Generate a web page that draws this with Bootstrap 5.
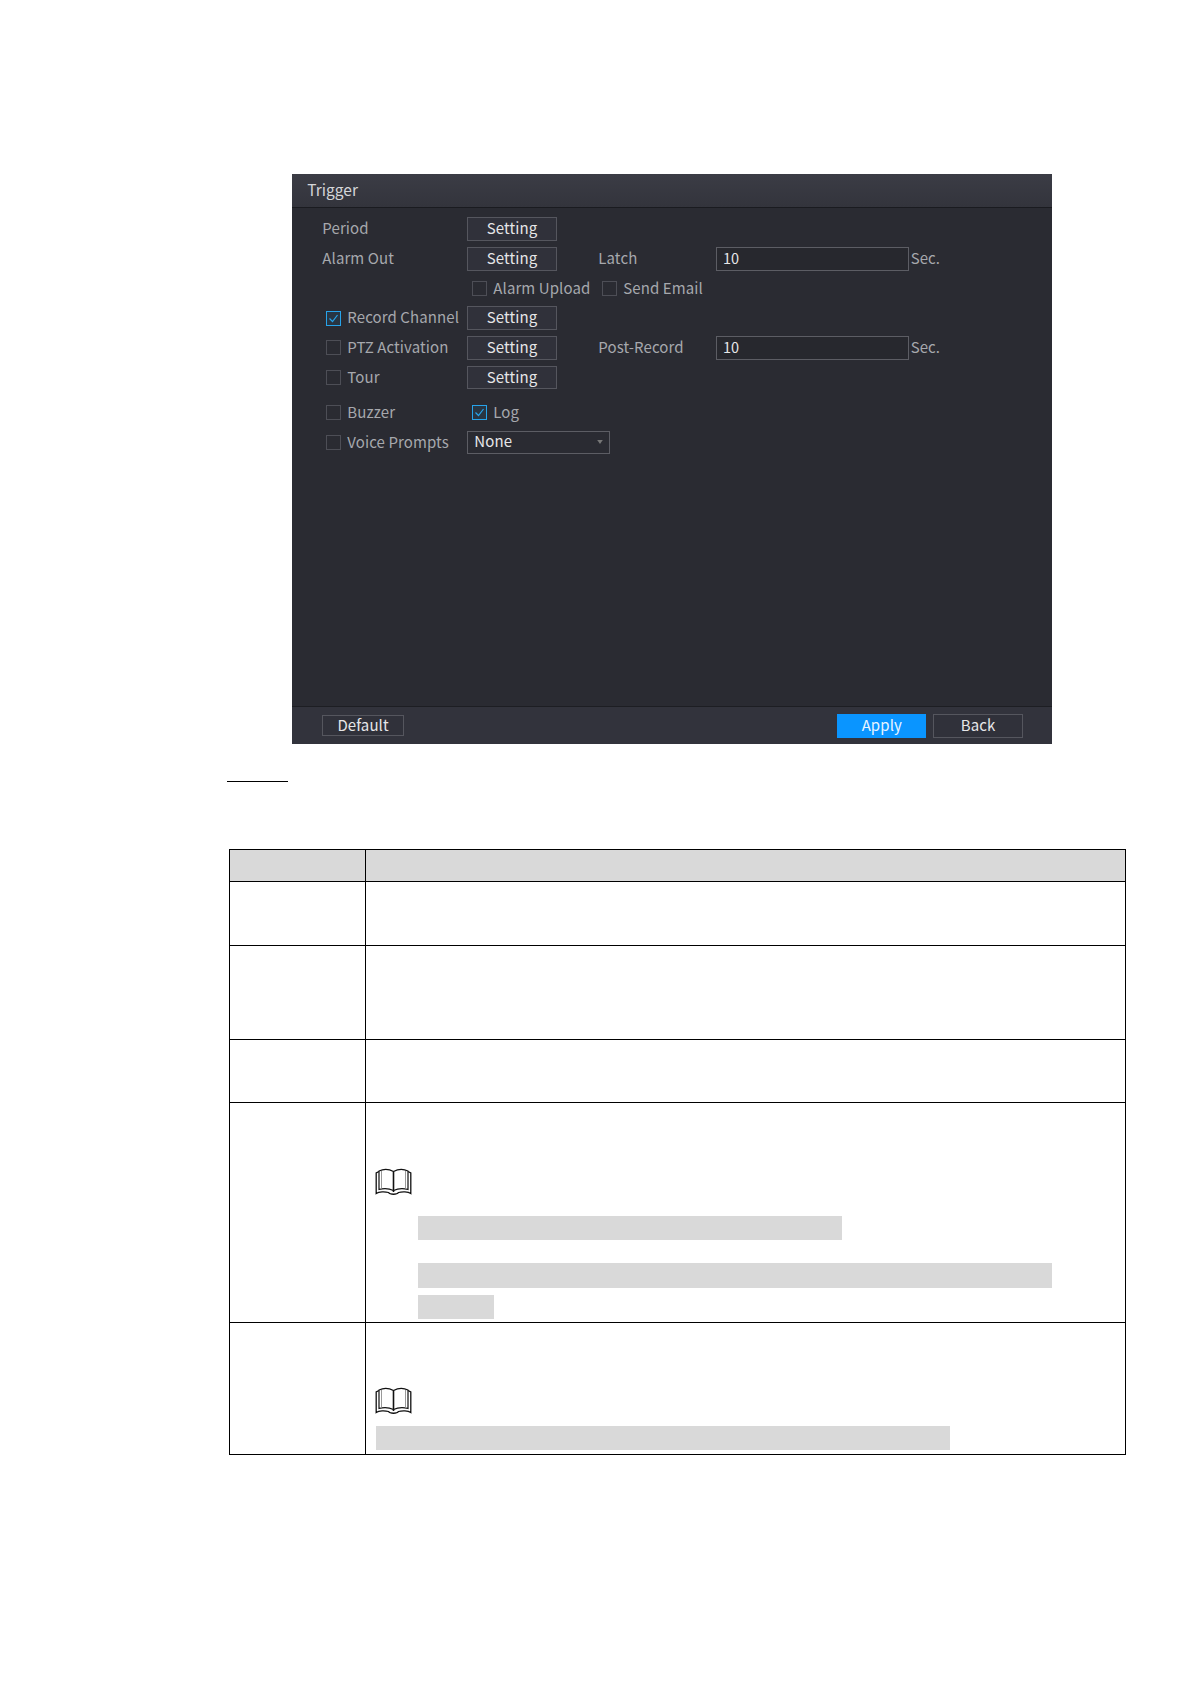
<!DOCTYPE html>
<html lang="en">
<head>
<meta charset="utf-8">
<title>Trigger</title>
<link href="https://cdn.jsdelivr.net/npm/bootstrap@5.3.0/dist/css/bootstrap.min.css" rel="stylesheet">
<style>
body{background:#fff;font-family:"Noto Sans CJK SC","Noto Sans",sans-serif;}
.sheet{width:1191px;height:1684px;padding-top:174.3px;}
.dvr{width:760px;height:570px;margin-left:292.3px;background:#2a2b32;color:#a6a8ad;font-size:15px;line-height:1;letter-spacing:.1px;}
.dvr-head{height:33.500px;background:linear-gradient(#3b3c45,#33343c);border-bottom:1px solid #1a1b20;padding:0 0 2px 15px;color:#d4d5d8;font-size:15.5px;letter-spacing:0;}
.dvr-body{padding:9.500px 0 0 30px;gap:6px;}
.dvr-foot{height:38.500px;background:#32333c;border-top:1px solid #1d1e23;padding:0 29.5px 0 30px;}
.frow{height:23.7px;}
.frow-gap{margin-top:5.5px;}
.frow>span,.frow>label{padding-bottom:2.500px;}
.frow>label>.chk{margin-top:2.500px;}
.lab{width:145px;}
.lab-in{width:145px;padding-left:4px;}
.lab-c{margin-left:5px;width:130px;}
.lab-w{width:117.7px;margin-left:41.6px;}
.sec{margin-left:2px;}
.dvr .chk{width:15px;height:15px;margin-right:6px;margin-bottom:0;margin-left:0;flex:none;background-color:transparent;border:1px solid #4d4e56;border-radius:0;}
.dvr .chk:checked{background-color:#283542;border-color:#27a3ea;background-size:11px;background-image:url("data:image/svg+xml,%3csvg xmlns='http://www.w3.org/2000/svg' viewBox='0 0 11 11'%3e%3cpath fill='none' stroke='%2327a3ea' stroke-width='1.2' d='M1.5 5.5l3 3 5-6.5'/%3e%3c/svg%3e");}
.dvr .btnx{width:89.4px;height:23.7px;padding:0 0 3px;background:#30313a;border:1px solid #55565e;border-radius:0;color:#e6e6e8;font-size:15px;line-height:1;letter-spacing:.1px;}
.dvr .fld{width:192.7px;height:23.7px;padding:0 0 2px 6px;background:#27282e;border:1px solid #5c5d64;border-radius:0;color:#e6e6e8;font-size:14.5px;line-height:1;}
.dvr .pick{width:142.4px;height:23.7px;padding:0 0 3px 6px;background-color:#2a2b32;background-size:6px 4px;background-position:right 6px center;background-image:url("data:image/svg+xml,%3csvg xmlns='http://www.w3.org/2000/svg' viewBox='0 0 7 5'%3e%3cpath fill='%23777' d='M0 0h7L3.500 5z'/%3e%3c/svg%3e");border:1px solid #5c5d64;border-radius:0;color:#e6e6e8;font-size:15px;line-height:1;letter-spacing:.1px;}
.dvr .btn-def{width:81.500px;height:21.500px;}
.dvr .btn-back{width:89.500px;height:24px;margin-left:7px;}
.dvr .btn-apply{width:89px;height:24px;padding:0 0 3px;background:#0a95ff;border:0;border-radius:0;color:#e8f4ff;font-size:15px;line-height:1;letter-spacing:.1px;}
.rule{width:61.300px;height:1.500px;background:#000;margin:36.300px 0 0 226.700px;}
.spec{--bs-table-border-color:#000;width:897px;margin:66.500px 0 0 229.300px;table-layout:fixed;}
.spec>*>tr>*{padding:0;border:1px solid #000;background:transparent;box-shadow:none;}
.spec>thead>tr>th{background:#d9d9d9;}
.col-a{width:136px;}
.h0{height:32px;}.h1{height:64px;}.h2{height:94px;}.h3{height:63px;}.h4{height:220px;}.h5{height:132px;}
.tip{display:block;width:37px;height:27px;margin-left:8.500px;}
.tip-a{margin-top:65px;}
.tip-b{margin-top:64px;}
.redact{background:#d9d9d9;height:24.500px;}
.r1{width:424px;margin:21px 0 0 52px;}
.r2{width:634px;margin:23px 0 0 52px;}
.r3{width:76px;margin:7px 0 0 52px;}
.r4{width:574px;margin:12px 0 0 10px;}
</style>
</head>
<body>
<div class="sheet">
  <div class="dvr d-flex flex-column">
    <div class="dvr-head d-flex align-items-center">Trigger</div>
    <div class="dvr-body d-flex flex-column flex-grow-1">
      <div class="frow d-flex align-items-center"><span class="lab">Period</span><button class="btn btnx" type="button">Setting</button></div>
      <div class="frow d-flex align-items-center"><span class="lab">Alarm Out</span><button class="btn btnx" type="button">Setting</button><span class="lab-w">Latch</span><input class="form-control fld" value="10"><span class="sec">Sec.</span></div>
      <div class="frow d-flex align-items-center"><span class="lab"></span><label class="lab-c d-flex align-items-center"><input class="form-check-input chk" type="checkbox">Alarm Upload</label><label class="d-flex align-items-center"><input class="form-check-input chk" type="checkbox">Send Email</label></div>
      <div class="frow d-flex align-items-center"><label class="lab-in d-flex align-items-center"><input class="form-check-input chk" type="checkbox" checked>Record Channel</label><button class="btn btnx" type="button">Setting</button></div>
      <div class="frow d-flex align-items-center"><label class="lab-in d-flex align-items-center"><input class="form-check-input chk" type="checkbox">PTZ Activation</label><button class="btn btnx" type="button">Setting</button><span class="lab-w">Post-Record</span><input class="form-control fld" value="10"><span class="sec">Sec.</span></div>
      <div class="frow d-flex align-items-center"><label class="lab-in d-flex align-items-center"><input class="form-check-input chk" type="checkbox">Tour</label><button class="btn btnx" type="button">Setting</button></div>
      <div class="frow frow-gap d-flex align-items-center"><label class="lab-in d-flex align-items-center"><input class="form-check-input chk" type="checkbox">Buzzer</label><label class="lab-c d-flex align-items-center"><input class="form-check-input chk" type="checkbox" checked>Log</label></div>
      <div class="frow d-flex align-items-center"><label class="lab-in d-flex align-items-center"><input class="form-check-input chk" type="checkbox">Voice Prompts</label><select class="form-select pick"><option>None</option></select></div>
    </div>
    <div class="dvr-foot d-flex align-items-center justify-content-between">
      <button class="btn btnx btn-def" type="button">Default</button>
      <div class="d-flex align-items-center">
        <button class="btn btn-apply" type="button">Apply</button>
        <button class="btn btnx btn-back" type="button">Back</button>
      </div>
    </div>
  </div>
  <div class="rule"></div>
  <table class="table table-bordered spec mb-0">
    <thead><tr class="h0"><th class="col-a"></th><th></th></tr></thead>
    <tbody>
      <tr class="h1"><td></td><td></td></tr>
      <tr class="h2"><td></td><td></td></tr>
      <tr class="h3"><td></td><td></td></tr>
      <tr class="h4"><td></td><td class="align-top">
        <svg class="tip tip-a" viewBox="0 0 37 27" fill="none" stroke="#111" aria-hidden="true"><path stroke-width="1.2" d="M4 3C8 1 14 1 18.500 3.500 23 1 29 1 33 3V21.500C29 20.500 23 20.500 18.500 22.500 14 20.500 8 20.500 4 21.500Z"/><path stroke-width="1.600" d="M18.500 3.500V24"/><path stroke-width="1.300" d="M4 3.500L1.200 5V25.500C4 23.500 10 23.500 13.500 24.500 15 26.800 22 26.800 23.500 24.500 27 23.500 33 23.500 35.800 25.500V5L33 3.500"/><path stroke="#999" d="M6.500 3V20.500M30.500 3V20.500"/></svg>
        <div class="redact r1"></div><div class="redact r2"></div><div class="redact r3"></div>
      </td></tr>
      <tr class="h5"><td></td><td class="align-top">
        <svg class="tip tip-b" viewBox="0 0 37 27" fill="none" stroke="#111" aria-hidden="true"><path stroke-width="1.2" d="M4 3C8 1 14 1 18.500 3.500 23 1 29 1 33 3V21.500C29 20.500 23 20.500 18.500 22.500 14 20.500 8 20.500 4 21.500Z"/><path stroke-width="1.600" d="M18.500 3.500V24"/><path stroke-width="1.300" d="M4 3.500L1.200 5V25.500C4 23.500 10 23.500 13.500 24.500 15 26.800 22 26.800 23.500 24.500 27 23.500 33 23.500 35.800 25.500V5L33 3.500"/><path stroke="#999" d="M6.500 3V20.500M30.500 3V20.500"/></svg>
        <div class="redact r4"></div>
      </td></tr>
    </tbody>
  </table>
</div>
<script src="https://cdn.jsdelivr.net/npm/bootstrap@5.3.0/dist/js/bootstrap.bundle.min.js"></script>
</body>
</html>
